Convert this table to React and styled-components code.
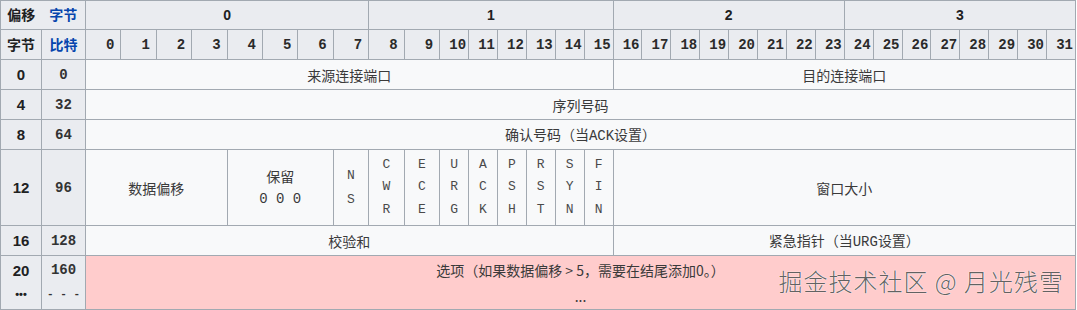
import React from "react";
import styled, { createGlobalStyle } from "styled-components";

const Global = createGlobalStyle`
  html, body { margin: 0; padding: 0; background: #ffffff; }
  body { font-family: "Liberation Sans", "Noto Sans CJK SC", sans-serif; }
`;

const Wrap = styled.div`
  position: relative;
  width: 1077px;
`;

const Table = styled.table`
  width: 1076px;
  table-layout: fixed;
  border-collapse: collapse;
  font-size: 14px;
  color: #333;
  font-family: "Noto Sans CJK SC", sans-serif;
`;

const Row = styled.tr`
  height: ${(p) => p.$h || 30}px;
`;

const Head = styled.th`
  background: #eaecf0;
  border: 1px solid #a2a9b1;
  padding: 0 4px;
  line-height: 22px;
  font-weight: 700;
  text-align: center;
  color: #202122;
  font-family: "Liberation Sans", "Noto Sans CJK SC", sans-serif;
  ${(p) => p.$link && "color: #0645ad;"}
  ${(p) => p.$hideRight && "border-right-style: hidden;"}
  ${(p) => p.$hideLeft && "border-left-style: hidden;"}
  vertical-align: middle;
`;

const BitNum = styled.th`
  background: #eaecf0;
  border: 1px solid #a2a9b1;
  padding: 0 ${(p) => (p.$wide ? 6 : 2)}px 0 0;
  text-align: right;
  font-family: "Liberation Mono", monospace;
  font-weight: 700;
  font-size: 14px;
  color: #2a2a2a;
`;

const LabelCell = styled.th`
  background: #eaecf0;
  border: 1px solid #a2a9b1;
  padding: 0 2px;
  text-align: center;
  line-height: ${(p) => (p.$stack ? "25px" : "22px")};
  vertical-align: ${(p) => (p.$stack ? "top" : "middle")};
  padding-top: ${(p) => (p.$stack ? 2 : 0)}px;
  color: ${(p) => (p.$mono ? "#333" : "#202122")};
  font-weight: 700;
  font-family: ${(p) => (p.$mono ? '"Liberation Mono", monospace' : '"Liberation Sans", sans-serif')};
  font-size: ${(p) => (p.$mono ? 14 : 15)}px;
`;

const Dots = styled.span`
  display: block;
  font-size: 11px;
  line-height: 22px;
`;

const Cell = styled.td`
  background: ${(p) => (p.$pink ? "#ffcccc" : "#f8f9fa")};
  border: 1px solid #a2a9b1;
  padding: 0 4px;
  text-align: center;
  vertical-align: ${(p) => (p.$top ? "top" : "middle")};
  line-height: 22px;
  color: #3a3a3a;
`;

const Stack = styled.div`
  display: flex;
  flex-direction: column;
  align-items: center;
  line-height: 23px;
`;

const Mono = styled.span`
  font-family: "Liberation Mono", monospace;
  font-size: 14px;
  color: #3a3a3a;
`;

const FlagCell = styled.td`
  background: #f8f9fa;
  border: 1px solid #a2a9b1;
  padding: 0;
  text-align: center;
  vertical-align: middle;
  font-family: "Liberation Mono", monospace;
  font-size: 13px;
  color: #4a4a4a;
`;

const FlagLetters = styled.div`
  display: flex;
  flex-direction: column;
  align-items: center;
  line-height: ${(p) => p.$lh}px;
`;

const Options = styled.div`
  display: flex;
  flex-direction: column;
  align-items: center;
  line-height: 26px;
  padding-top: 1px;
`;

const Watermark = styled.div`
  position: absolute;
  right: 13px;
  bottom: 12px;
  font-family: "Noto Sans CJK SC", sans-serif;
  font-size: 24px;
  font-weight: 300;
  letter-spacing: 1px;
  color: rgba(70, 70, 70, 0.85);
  text-shadow: 0 0 1px #fff, 0 0 1px #fff;
  pointer-events: none;
  white-space: pre;
`;

const colWidths = [
  41, 44,
  ...Array(8).fill(35.4),
  35.6, 35.4,
  ...Array(22).fill(28.9),
];

const flags = ["CWR", "ECE", "URG", "ACK", "PSH", "RST", "SYN", "FIN"];

export default function App() {
  return (
    <Wrap>
      <Global />
      <Table>
        <colgroup>
          {colWidths.map((w, i) => (
            <col key={i} style={{ width: `${w}px` }} />
          ))}
        </colgroup>
        <thead>
          <Row $h={29}>
            <Head $hideRight>偏移</Head>
            <Head $hideLeft $link>字节</Head>
            {[0, 1, 2, 3].map((n) => (
              <Head key={n} colSpan={8}>{n}</Head>
            ))}
          </Row>
          <Row $h={30}>
            <Head>字节</Head>
            <Head $link>比特</Head>
            {Array.from({ length: 32 }, (_, i) => (
              <BitNum key={i} $wide={i < 10}>{i}</BitNum>
            ))}
          </Row>
        </thead>
        <tbody>
          <Row $h={30}>
            <LabelCell>0</LabelCell>
            <LabelCell $mono>0</LabelCell>
            <Cell colSpan={16}>来源连接端口</Cell>
            <Cell colSpan={16}>目的连接端口</Cell>
          </Row>
          <Row $h={30}>
            <LabelCell>4</LabelCell>
            <LabelCell $mono>32</LabelCell>
            <Cell colSpan={32}>序列号码</Cell>
          </Row>
          <Row $h={30}>
            <LabelCell>8</LabelCell>
            <LabelCell $mono>64</LabelCell>
            <Cell colSpan={32}>
              确认号码（当<Mono>ACK</Mono>设置）
            </Cell>
          </Row>
          <Row $h={76}>
            <LabelCell>12</LabelCell>
            <LabelCell $mono>96</LabelCell>
            <Cell colSpan={4}>数据偏移</Cell>
            <Cell colSpan={3}>
              <Stack>
                <span>保留</span>
                <Mono>0 0 0</Mono>
              </Stack>
            </Cell>
            <FlagCell>
              <FlagLetters $lh={24}>
                <span>N</span>
                <span>S</span>
              </FlagLetters>
            </FlagCell>
            {flags.map((f) => (
              <FlagCell key={f}>
                <FlagLetters $lh={22.5}>
                  {f.split("").map((c, i) => (
                    <span key={i}>{c}</span>
                  ))}
                </FlagLetters>
              </FlagCell>
            ))}
            <Cell colSpan={16}>窗口大小</Cell>
          </Row>
          <Row $h={30}>
            <LabelCell>16</LabelCell>
            <LabelCell $mono>128</LabelCell>
            <Cell colSpan={16}>校验和</Cell>
            <Cell colSpan={16}>
              紧急指针（当<Mono>URG</Mono>设置）
            </Cell>
          </Row>
          <Row $h={52}>
            <LabelCell $stack>
              20
              <Dots>•••</Dots>
            </LabelCell>
            <LabelCell $stack $mono>
              160
              <Dots>- - -</Dots>
            </LabelCell>
            <Cell colSpan={32} $pink $top>
              <Options>
                <span>选项（如果数据偏移 &gt; 5，需要在结尾添加0。）</span>
                <span>...</span>
              </Options>
            </Cell>
          </Row>
        </tbody>
      </Table>
      <Watermark>掘金技术社区 @ 月光残雪</Watermark>
    </Wrap>
  );
}
